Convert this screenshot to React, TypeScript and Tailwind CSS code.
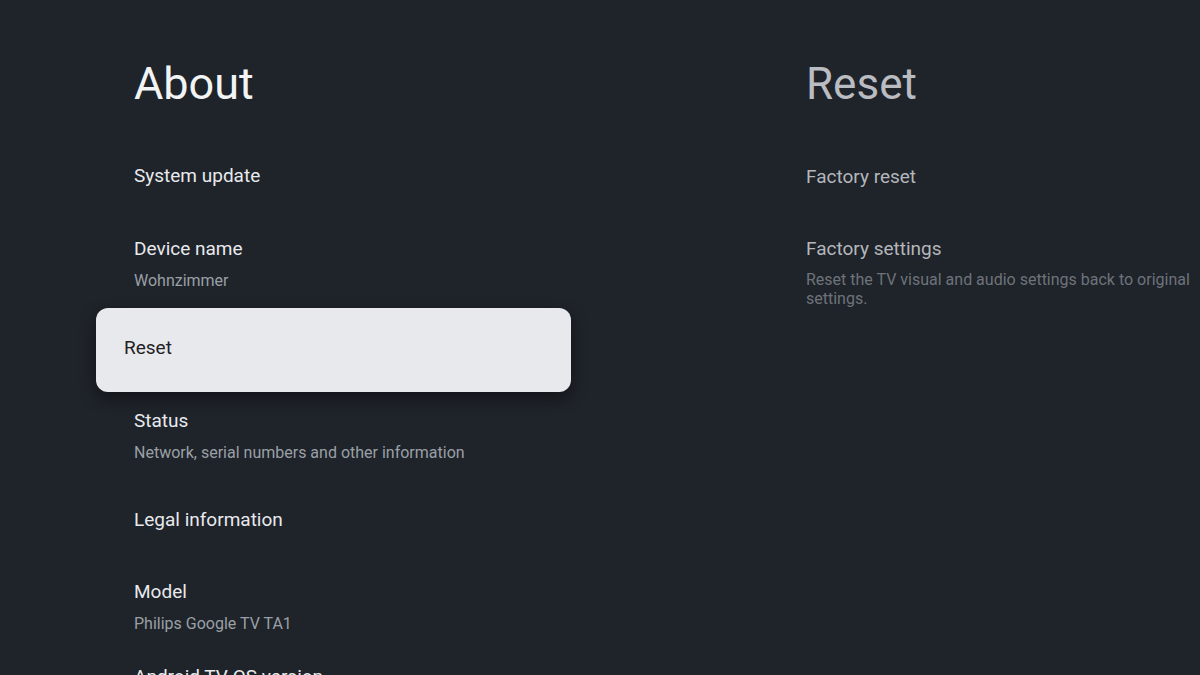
import React from 'react';

type Row = { title: string; sub?: string; pad: string };

const ROWS_BEFORE: Row[] = [
  { title: 'System update', pad: 'pt-[24px] pb-[25px]' },
  { title: 'Device name', sub: 'Wohnzimmer', pad: 'pt-[24px] pb-[17px]' },
];

const ROWS_AFTER: Row[] = [
  { title: 'Status', sub: 'Network, serial numbers and other information', pad: 'pt-[17px] pb-[21px]' },
  { title: 'Legal information', pad: 'pt-[24px] pb-[24px]' },
  { title: 'Model', sub: 'Philips Google TV TA1', pad: 'pt-[24px] pb-[7px]' },
  { title: 'Android TV OS version', sub: '12', pad: 'pt-[24px] pb-[17px]' },
];

const MenuRow = ({ row }: { row: Row }) => (
  <div className={`px-[38px] ${row.pad}`}>
    <div className="text-[19px] leading-[24px] text-[#e8eaed] whitespace-nowrap">{row.title}</div>
    {row.sub && (
      <div className="mt-[10px] text-[16px] leading-[20px] text-[#9aa0a6] whitespace-nowrap">{row.sub}</div>
    )}
  </div>
);

export default function App() {
  return (
    <main
      className="w-[1200px] h-[675px] overflow-hidden bg-[#1f232a] flex pl-[96px] gap-[235px]"
      style={{ fontFamily: 'Roboto, "Noto Sans", sans-serif' }}
    >
      {/* Left pane: About list */}
      <section className="w-[475px] shrink-0 pt-[58px]">
        <h1 className="px-[38px] text-[45px] leading-[52px] text-[#f1f3f4] font-normal">About</h1>

        <div className="mt-[30px]">
          {ROWS_BEFORE.map(r => <MenuRow key={r.title} row={r} />)}

          {/* focused item */}
          <div className="h-[84px] rounded-[12px] bg-[#e8e9ec] px-[28px] pt-[28px] shadow-[0_6px_16px_rgba(0,0,0,0.45)]">
            <div className="text-[19px] leading-[24px] text-[#1f2124]">Reset</div>
          </div>

          {ROWS_AFTER.map(r => <MenuRow key={r.title} row={r} />)}
        </div>
      </section>

      {/* Right pane: Reset preview */}
      <section className="w-[394px] shrink-0 pt-[58px]">
        <h2 className="text-[44px] leading-[52px] text-[#b9bcc0] font-normal">Reset</h2>
        <div className="mt-[55px] text-[19px] leading-[24px] text-[#b4b7bb]">Factory reset</div>
        <div className="mt-[48px] text-[19px] leading-[24px] text-[#b4b7bb]">Factory settings</div>
        <p className="mt-[9px] text-[16px] leading-[19px] text-[#6e737a]">
          <span className="whitespace-nowrap">Reset the TV visual and audio settings back to original</span>
          <br />
          settings.
        </p>
      </section>
    </main>
  );
}
